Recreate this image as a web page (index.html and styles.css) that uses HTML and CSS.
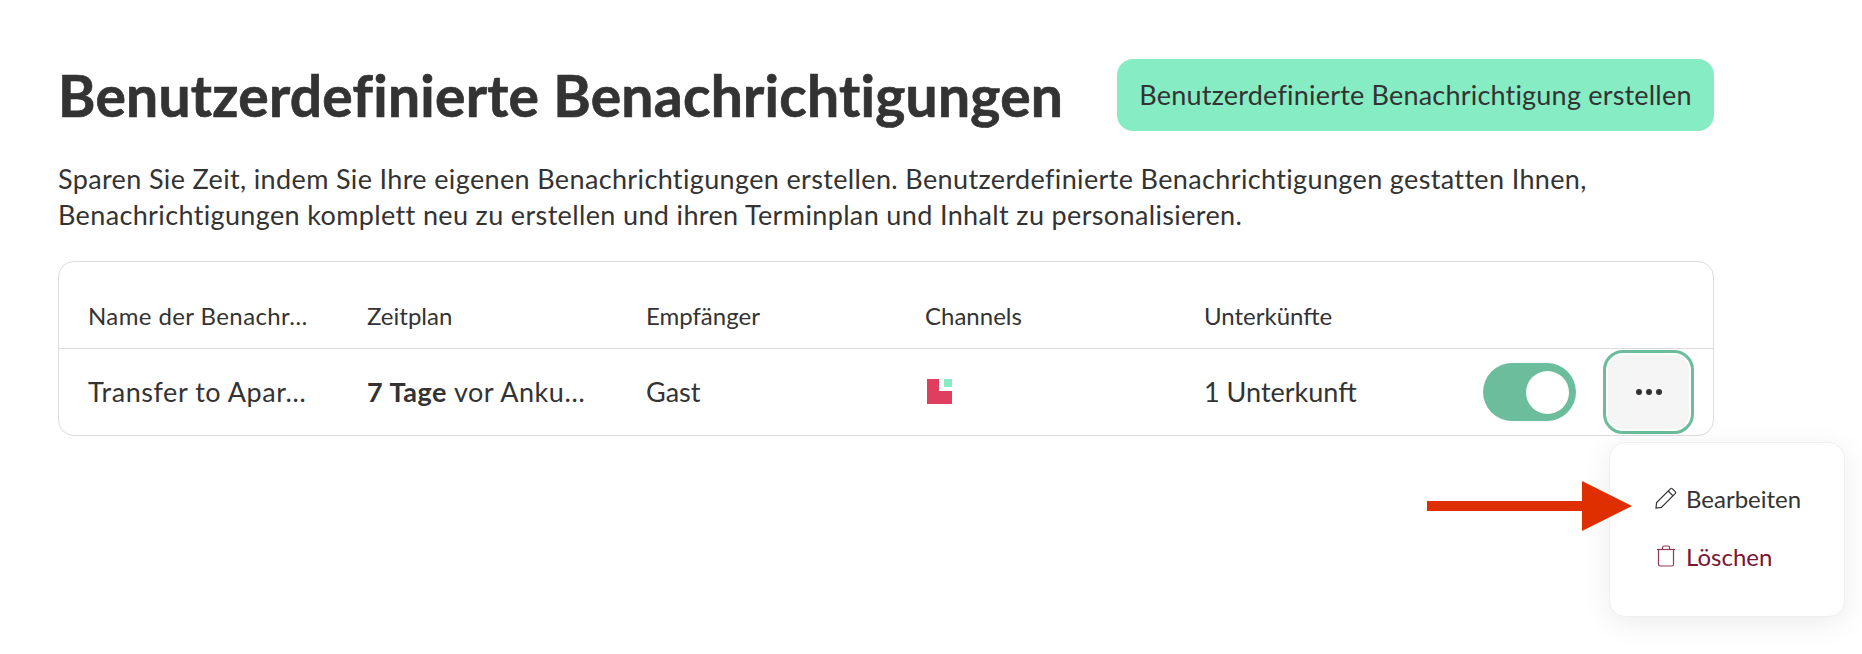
FILE: index.html
```html
<!DOCTYPE html>
<html lang="en">
<head>
  <meta charset="UTF-8" />
  <meta name="viewport" content="width=device-width, initial-scale=1.0"/>
  <title>Benutzerdefinierte Benachrichtigungen</title>
  <link rel="stylesheet" href="styles.css">
</head>
<body>
  <main class="page">
    <div class="page-head">
      <h1>Benutzerdefinierte Benachrichtigungen</h1>
      <button class="create-btn">Benutzerdefinierte Benachrichtigung erstellen</button>
    </div>
    <p class="intro">Sparen Sie Zeit, indem Sie Ihre eigenen Benachrichtigungen erstellen. Benutzerdefinierte Benachrichtigungen gestatten Ihnen,<br>Benachrichtigungen komplett neu zu erstellen und ihren Terminplan und Inhalt zu personalisieren.</p>

    <div class="card">
      <div class="row row-head">
        <div class="cell name-head">Name der Benachr…</div>
        <div class="cell">Zeitplan</div>
        <div class="cell">Empfänger</div>
        <div class="cell">Channels</div>
        <div class="cell">Unterkünfte</div>
      </div>
      <div class="row row-body">
        <div class="cell wide">Transfer to Apar…</div>
        <div class="cell wide"><b>7 Tage</b> vor Anku…</div>
        <div class="cell">Gast</div>
        <div class="cell">
          <svg class="channel-icon" width="25" height="25" viewBox="0 0 25 25">
            <path d="M0 0H12V12H25V25H0Z" fill="#e03e5f"/>
            <rect x="17" y="0" width="8" height="8" fill="#86ecc3"/>
          </svg>
        </div>
        <div class="cell">1 Unterkunft</div>
        <div class="actions">
          <span class="toggle"><span class="knob"></span></span>
          <button class="more-btn">
            <span class="dot"></span><span class="dot"></span><span class="dot"></span>
          </button>
        </div>
      </div>
    </div>
  </main>

  <!-- Menu -->
  <div class="menu">
    <div class="menu-item">
      <svg width="22" height="22" viewBox="0 0 22 22" fill="none" stroke="#333" stroke-width="1.2">
        <path d="M1 21L1.6 15.6L15.6 1.6Q16.4 .9 17.2 1.6L20.4 4.8Q21.1 5.6 20.4 6.4L6.4 20.4Z"/>
        <path d="M13.2 4L18 8.8"/>
      </svg>
      <span>Bearbeiten</span>
    </div>
    <div class="menu-item danger">
      <svg width="22" height="22" viewBox="0 0 22 22" fill="none" stroke="#8f3a55" stroke-width="1.2">
        <path d="M2 4.5H20"/>
        <path d="M7.5 4.5V2.5Q7.5 1 9 1H13Q14.5 1 14.5 2.5V4.5"/>
        <path d="M3.5 4.5V19.5Q3.5 21 5 21H17Q18.5 21 18.5 19.5V4.5"/>
      </svg>
      <span>Löschen</span>
    </div>
  </div>

  <!-- Arrow -->
  <svg class="arrow" width="206" height="52" viewBox="0 0 206 52">
    <path d="M0 21H155V1L205 26L155 51V31H0Z" fill="#df2e00"/>
  </svg>
</body>
</html>
```

FILE: styles.css
```css
body {
  font-family: "Lato", "Noto Sans", sans-serif;
  margin: 0;
  background: #fff;
  color: #333;
  height: 654px;
  overflow: hidden;
  position: relative;
}

.page {
  width: 1656px;
  padding: 59px 0 0 58px;
}

.page-head {
  display: flex;
  justify-content: space-between;
  align-items: center;
  height: 72px;
}

h1 {
  margin: 0;
  font-size: 57px;
  font-weight: 700;
  letter-spacing: 0.25px;
  line-height: 74px;
  white-space: nowrap;
  -webkit-text-stroke: 0.7px #333;
}

.create-btn {
  width: 597px;
  height: 72px;
  padding: 0 0 2px;
  border: none;
  border-radius: 16px;
  background: #86ecc3;
  color: #333;
  font-family: inherit;
  font-size: 27px;
  letter-spacing: 0.2px;
}

.intro {
  margin: 30px 0 0;
  font-size: 27px;
  letter-spacing: 0.36px;
  line-height: 36px;
  white-space: nowrap;
}

.card {
  margin-top: 28px;
  border: 1px solid #dcdcdc;
  border-radius: 16px;
  font-size: 27px;
}

.row {
  display: flex;
  align-items: center;
  padding-left: 29px;
}

.row-head {
  height: 87px;
  padding-top: 21px;
  box-sizing: border-box;
  border-bottom: 1px solid #dcdcdc;
  font-size: 24px;
}

.row-body {
  height: 86px;
}

.row-body .cell {
  margin-bottom: 2px;
}

.cell {
  width: 279px;
  flex: none;
  white-space: nowrap;
}

.name-head {
  letter-spacing: 0.4px;
}

.wide {
  letter-spacing: 0.55px;
}

.channel-icon {
  display: block;
  margin-left: 2px;
}

.actions {
  display: flex;
  align-items: center;
  gap: 27px;
}

.toggle {
  display: flex;
  align-items: center;
  justify-content: flex-end;
  width: 93px;
  height: 58px;
  padding-right: 7px;
  box-sizing: border-box;
  border-radius: 29px;
  background: #6bbd9b;
}

.knob {
  width: 43px;
  height: 43px;
  border-radius: 50%;
  background: #fff;
}

.more-btn {
  display: flex;
  align-items: center;
  justify-content: center;
  gap: 4px;
  width: 91px;
  height: 84px;
  padding: 0;
  border: 3px solid #6bbd9b;
  border-radius: 20px;
  background: #f5f5f5;
  box-shadow: inset 0 0 0 2px #fff;
}

.dot {
  width: 6px;
  height: 6px;
  border-radius: 50%;
  background: #333;
}

.menu {
  position: absolute;
  left: 1609px;
  top: 442px;
  width: 236px;
  height: 175px;
  box-sizing: border-box;
  padding: 39px 0 0 45px;
  background: #fff;
  border: 1px solid #f0f0f0;
  border-radius: 16px;
  box-shadow: 0 6px 30px rgba(0, 0, 0, 0.08);
  font-size: 24px;
}

.menu-item {
  display: flex;
  align-items: center;
  gap: 9px;
  height: 32px;
  margin-bottom: 26px;
}

.danger {
  color: #7a1533;
}

.arrow {
  position: absolute;
  left: 1427px;
  top: 480px;
}
```
